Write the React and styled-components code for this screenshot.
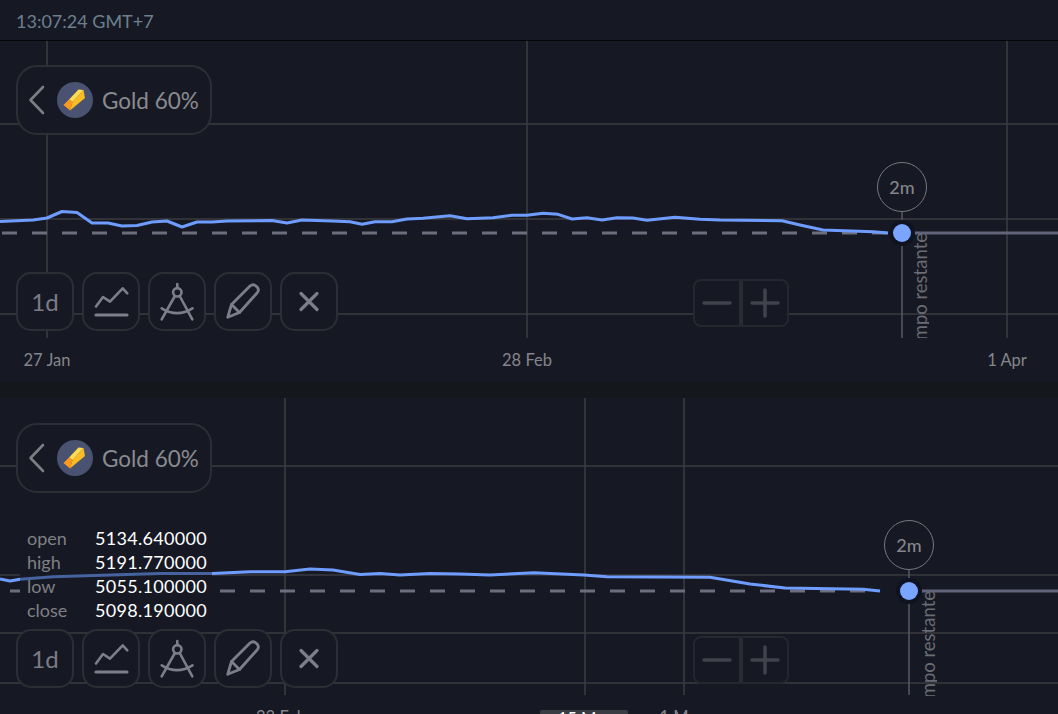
import React from 'react';
import styled, { createGlobalStyle } from 'styled-components';

const FONT = '"Lato", "Noto Sans", sans-serif';

const GlobalStyle = createGlobalStyle`
  html, body {
    margin: 0;
    padding: 0;
    height: 100%;
    overflow: hidden;
    background: #161923;
    font-family: ${FONT};
  }
`;

const Page = styled.div`
  width: 1058px;
  height: 714px;
  overflow: hidden;
  background: #161923;
`;

const Header = styled.div`
  height: 40px;
  display: flex;
  align-items: center;
  padding: 2px 16px 0;
  box-sizing: border-box;
  color: #6d7f8f;
  font-size: 18px;
`;

const HeaderRule = styled.div`
  height: 1px;
  background: #05060a;
`;

const Panel = styled.section`
  position: relative;
  height: ${p => p.$height}px;
  overflow: hidden;
  background: #161923;
`;

const Gutter = styled.div`
  height: 16px;
  background: #14181c;
`;

const Canvas = styled.svg`
  display: block;
`;

const BackPill = styled.div`
  position: absolute;
  left: 16px;
  top: ${p => p.$top}px;
  width: 196px;
  height: 70px;
  box-sizing: border-box;
  display: flex;
  align-items: center;
  padding-left: 10px;
  border: 2px solid #2d2e35;
  border-radius: 21px;
  background: #161923;
  color: #8a8b90;
  font-size: 22.5px;
`;

const Coin = styled.div`
  width: 36px;
  height: 36px;
  margin: 0 9px 0 11px;
  border-radius: 50%;
  background: #4a5272;
  display: flex;
`;

const Toolbar = styled.div`
  position: absolute;
  left: 16px;
  top: 231px;
  display: flex;
  gap: 8px;
`;

const ToolButton = styled.div`
  position: relative;
  width: 58px;
  height: 59px;
  box-sizing: border-box;
  display: flex;
  align-items: center;
  justify-content: center;
  border: 2px solid #2d2e35;
  border-radius: 15px;
  background: #161923;
  color: #7b7c88;
  font-size: 24px;
`;

const ToolIcon = styled.svg`
  display: block;
`;

const ZoomBox = styled.div`
  position: absolute;
  left: 693px;
  top: 238px;
  width: 96px;
  height: 48px;
  box-sizing: border-box;
  display: flex;
  border: 2px solid #26272e;
  border-radius: 8px;
  background: #161923;
`;

const ZoomHalf = styled.div`
  flex: 1;
  display: flex;
  align-items: center;
  justify-content: center;
  & + & {
    border-left: 4px solid #2a2b32;
  }
`;

const Timer = styled.div`
  position: absolute;
  width: 50px;
  height: 50px;
  box-sizing: border-box;
  display: flex;
  align-items: center;
  justify-content: center;
  border: 1.5px solid #77777d;
  border-radius: 50%;
  color: #85858c;
  font-size: 18px;
  font-weight: 500;
`;

const RemainingClip = styled.div`
  position: absolute;
  width: 16px;
  height: 105px;
  overflow: hidden;
  display: flex;
  flex-direction: column;
`;

const RemainingText = styled.div`
  flex-shrink: 0;
  writing-mode: vertical-rl;
  transform: rotate(180deg);
  white-space: nowrap;
  color: #6a6b73;
  font-size: 18.5px;
  line-height: 15px;
`;

const AxisLabel = styled.div`
  position: absolute;
  top: 310px;
  transform: translateX(-50%);
  white-space: nowrap;
  color: #85868c;
  font-size: 16.5px;
  line-height: 18px;
`;

const AxisTag = styled(AxisLabel)`
  top: 312px;
  width: 88px;
  text-align: center;
  background: #3a3c44;
  color: #fff;
  border-radius: 2px;
`;

const Tooltip = styled.div`
  position: absolute;
  left: 27px;
  top: 128px;
  display: grid;
  grid-template-columns: 68px auto;
  grid-auto-rows: 24px;
  align-items: center;
  font-size: 18px;
`;

const Label = styled.div`
  color: #7f8086;
`;

const Value = styled.div`
  color: #fff;
  letter-spacing: 0.3px;
`;

const Chevron = () => (
  <svg width="18" height="30" viewBox="0 0 18 30" fill="none" stroke="#7d7e85" strokeWidth="2.6" strokeLinecap="round" strokeLinejoin="round">
    <path d="M15 2 L2.5 15 L15 28" />
  </svg>
);

const GoldBar = () => (
  <svg width="36" height="36" viewBox="0 0 36 36">
    <polygon points="15.5,20 26.5,8 28,16 13,28.5" fill="#f7bd22" />
    <polygon points="12,17.5 21.5,7.5 26.5,8 15.5,20" fill="#ffdb4f" />
    <polygon points="6.5,23 12,17.5 15.5,20 13,28.5" fill="#fb9a1e" />
  </svg>
);

const iconStroke = {
  fill: 'none',
  stroke: '#7d7e8a',
  strokeLinecap: 'round',
  strokeLinejoin: 'round',
};

const Tools = () => (
  <Toolbar>
    <ToolButton>1d</ToolButton>
    <ToolButton>
      <ToolIcon width="54" height="55" viewBox="3 2 54 55" {...iconStroke} strokeWidth="2.6">
        <path d="M15 34.5 L22 25 L29 29.7 L41.7 16.3 L46.3 21.3" />
        <path d="M15 43 L46 43" strokeWidth="3.2" />
      </ToolIcon>
    </ToolButton>
    <ToolButton>
      <ToolIcon width="54" height="55" viewBox="2 2 54 55" {...iconStroke} strokeWidth="2.6">
        <circle cx="29.3" cy="20.3" r="4.2" />
        <path d="M29.3 12 L29.3 16" />
        <path d="M26.9 24 L13.7 47.3" />
        <path d="M31.7 24 L44.3 47.3" />
        <path d="M13.7 36.3 Q29 46 44.5 36.3" />
      </ToolIcon>
    </ToolButton>
    <ToolButton>
      <ToolIcon width="54" height="55" viewBox="2 2 54 55" {...iconStroke} strokeWidth="2.8">
        <path d="M13.7 45.3 L17.5 32.5 L36 14 Q39 11.5 42 14 L43.5 15.5 Q45.5 18.5 43 21 L25.5 40.5 Z" />
        <path d="M17.5 32.5 L25.5 40.5" />
      </ToolIcon>
    </ToolButton>
    <ToolButton>
      <ToolIcon width="54" height="55" viewBox="2 2 54 55" {...iconStroke} strokeWidth="3.2">
        <path d="M21 21.5 L37 37.5" />
        <path d="M37 21.5 L21 37.5" />
      </ToolIcon>
    </ToolButton>
  </Toolbar>
);

const ZoomControl = () => (
  <ZoomBox>
    <ZoomHalf>
      <svg width="30" height="30" viewBox="0 0 30 30" stroke="#41424c" strokeWidth="3.5" strokeLinecap="round">
        <path d="M2 15 L28 15" />
      </svg>
    </ZoomHalf>
    <ZoomHalf>
      <svg width="30" height="30" viewBox="0 0 30 30" stroke="#41424c" strokeWidth="3.5" strokeLinecap="round">
        <path d="M2 15 L28 15" />
        <path d="M15 2 L15 28" />
      </svg>
    </ZoomHalf>
  </ZoomBox>
);

const toPoints = (pts, top) => pts.map(([x, y]) => `${x},${y - top}`).join(' ');

const Chart = ({ chart }) => {
  const { top, height, rows, cols, timerX, dashStart, dashEnd, line, labels, tooltip } = chart;
  const dotY = chart.dotY - top;
  return (
    <Panel $height={height}>
      <Canvas width="1058" height={height}>
        <defs>
          <clipPath id={`dim-${top}`}>
            <rect x="20" y="0" width="192" height={height} />
          </clipPath>
          <clipPath id={`bright-${top}`}>
            <rect x="0" y="0" width="20" height={height} />
            <rect x="212" y="0" width="846" height={height} />
          </clipPath>
        </defs>
        {rows.map(y => (
          <line key={y} x1="0" x2="1058" y1={y} y2={y} stroke="#3b3b40" strokeWidth="1.6" />
        ))}
        {cols.map(x => (
          <line key={x} x1={x} x2={x} y1="0" y2="297" stroke="#3b3b40" strokeWidth="1.6" />
        ))}
        <line x1={timerX} x2={timerX} y1={dotY - 22} y2="297" stroke="#55565c" strokeWidth="1.6" />
        <line x1={dashStart} x2={dashEnd} y1={dotY} y2={dotY} stroke="#6c6e80" strokeWidth="3.2" strokeDasharray="15 15" />
        <line x1={timerX} x2="1058" y1={dotY} y2={dotY} stroke="#62647a" strokeWidth="3" />
        {tooltip && <rect x="20" y="130" width="192" height="95" fill="#161923" />}
        <polyline
          points={toPoints(line, top)}
          fill="none"
          stroke="#6f9cff"
          strokeWidth="3"
          strokeLinejoin="round"
          clipPath={tooltip ? `url(#bright-${top})` : undefined}
        />
        {tooltip && (
          <polyline
            points={toPoints(line, top)}
            fill="none"
            stroke="#46639f"
            strokeWidth="3"
            strokeLinejoin="round"
            clipPath={`url(#dim-${top})`}
          />
        )}
        <circle cx={timerX} cy={dotY} r="13" fill="#0f1220" />
        <circle cx={timerX} cy={dotY} r="9" fill="#7aa5ff" />
      </Canvas>

      <BackPill $top={chart.pillTop}>
        <Chevron />
        <Coin><GoldBar /></Coin>
        Gold 60%
      </BackPill>

      <Timer style={{ left: timerX - 25, top: dotY - 71 }}>2m</Timer>
      <RemainingClip style={{ left: timerX + chart.textGap, top: dotY }}>
        <RemainingText>Tiempo restante</RemainingText>
      </RemainingClip>

      {tooltip && (
        <Tooltip>
          {tooltip.map(([name, value]) => (
            <React.Fragment key={name}>
              <Label>{name}</Label>
              <Value>{value}</Value>
            </React.Fragment>
          ))}
        </Tooltip>
      )}

      <Tools />
      <ZoomControl />

      {labels.map(({ x, text, tag }) =>
        tag
          ? <AxisTag key={text} style={{ left: x }}>{text}</AxisTag>
          : <AxisLabel key={text} style={{ left: x }}>{text}</AxisLabel>
      )}
    </Panel>
  );
};

const charts = [
  {
    top: 41,
    height: 341,
    rows: [83, 178, 273],
    cols: [47, 527, 1007],
    timerX: 902,
    dotY: 233,
    dashStart: 2,
    dashEnd: 888,
    pillTop: 24,
    textGap: 11,
    labels: [
      { x: 47, text: '27 Jan' },
      { x: 527, text: '28 Feb' },
      { x: 1007, text: '1 Apr' },
    ],
    line: [
      [0, 221.5], [33, 220], [47, 218], [62, 211.5], [77, 212.5], [92, 223], [108, 223], [122, 226],
      [137, 225.5], [152, 222], [167, 221], [182, 227], [197, 222], [212, 222], [227, 221], [272, 220.5],
      [287, 223], [302, 220], [332, 221], [350, 221.7], [362, 224.3], [375, 221.7], [392, 221.7], [407, 219],
      [423, 218.3], [450, 215.7], [467, 218.7], [493, 217.7], [512, 215.3], [527, 215.3], [543, 213.3],
      [558, 214.3], [572, 219], [587, 217.7], [602, 220], [617, 217.7], [633, 218], [647, 220.3], [675, 217.3],
      [700, 219.3], [720, 220], [782, 220.7], [800, 225], [823, 230], [873, 231.7], [888, 233],
    ],
  },
  {
    top: 398,
    height: 316,
    rows: [68, 177, 235, 285],
    cols: [285, 585, 684],
    timerX: 909,
    dotY: 591,
    dashStart: 10,
    dashEnd: 878,
    pillTop: 25,
    textGap: 12,
    labels: [
      { x: 281, text: '23 Feb' },
      { x: 584, text: '15 Mar', tag: true },
      { x: 681, text: '1 Mar' },
    ],
    tooltip: [
      ['open', '5134.640000'],
      ['high', '5191.770000'],
      ['low', '5055.100000'],
      ['close', '5098.190000'],
    ],
    line: [
      [0, 579], [10, 581], [20, 579.3], [53, 576.8], [160, 573.5], [212, 573.5], [250, 571.7], [285, 571.7],
      [310, 569], [333, 570], [360, 574.5], [380, 573.5], [400, 575], [430, 573.5], [460, 574], [490, 575],
      [534, 572.7], [584, 575], [607, 576.7], [710, 577.3], [750, 584], [785, 588], [863, 589.3], [880, 591],
    ],
  },
];

export default function App() {
  return (
    <Page>
      <GlobalStyle />
      <Header>13:07:24 GMT+7</Header>
      <HeaderRule />
      <Chart chart={charts[0]} />
      <Gutter />
      <Chart chart={charts[1]} />
    </Page>
  );
}
